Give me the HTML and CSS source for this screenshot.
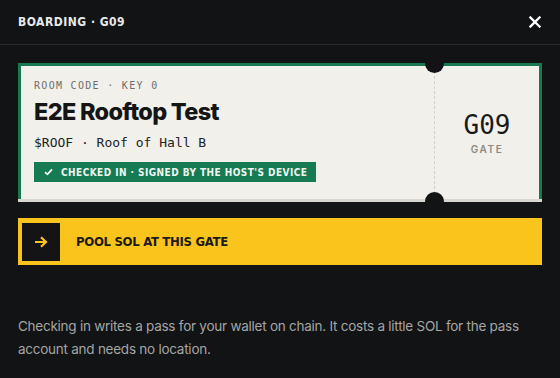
FILE: index.html
```html
<!DOCTYPE html>
<html>
<head>
    <title>Boarding · G09</title>
    <link rel="stylesheet" href="styles.css">
</head>
<body>
    <div class="sheet">
        <div class="sheet-header">
            <h1 class="sheet-title">BOARDING · G09</h1>
            <button class="close-btn" aria-label="Close">
                <svg width="12" height="12" viewBox="0 0 12 12">
                    <path d="M1.5 1.5 L10.5 10.5 M10.5 1.5 L1.5 10.5" stroke="#ffffff" stroke-width="2.3" stroke-linecap="square" fill="none"/>
                </svg>
            </button>
        </div>

        <div class="sheet-body">
            <div class="ticket">
                <div class="ticket-main">
                    <div class="ticket-label">ROOM CODE · KEY 0</div>
                    <div class="ticket-title">E2E Rooftop Test</div>
                    <div class="ticket-sub">$ROOF · Roof of Hall B</div>
                    <div class="badge">
                        <svg width="9" height="8" viewBox="0 0 9 8">
                            <path d="M1 4.2 L3.4 6.4 L8 1.4" stroke="#ffffff" stroke-width="1.6" fill="none"/>
                        </svg>
                        <span>CHECKED IN · SIGNED BY THE HOST'S DEVICE</span>
                    </div>
                </div>
                <div class="ticket-stub">
                    <div class="gate-code">G09</div>
                    <div class="gate-label">GATE</div>
                </div>
            </div>

            <button class="pool-btn">
                <span class="pool-icon">
                    <svg width="14" height="12" viewBox="0 0 14 12">
                        <path d="M1 6 H12 M7 1.2 L12 6 L7 10.8" stroke="#f9c51d" stroke-width="2.2" fill="none"/>
                    </svg>
                </span>
                <span class="pool-text">POOL SOL AT THIS GATE</span>
            </button>

            <p class="note">Checking in writes a pass for your wallet on chain. It costs a little SOL for the pass account and needs no location.</p>
        </div>
    </div>
</body>
</html>
```

FILE: styles.css
```css
body {
    margin: 0;
    background-color: #121315;
    font-family: Inter, "Liberation Sans", sans-serif;
}

.sheet-header {
    height: 44px;
    padding: 0 18px;
    display: flex;
    align-items: center;
    justify-content: space-between;
    border-bottom: 1px solid #2a2b2e;
}

.sheet-title {
    margin: 0;
    font-family: "DejaVu Sans", sans-serif;
    font-stretch: condensed;
    font-size: 12px;
    font-weight: bold;
    letter-spacing: 0.5px;
    color: #e9e9e9;
}

.close-btn {
    background: none;
    border: none;
    padding: 0;
    margin-right: 1px;
    display: flex;
    cursor: pointer;
}

.sheet-body {
    padding: 18px 18px 0;
}

/* ticket card */
.ticket {
    display: flex;
    background-color: #f1f0eb;
    border: 3px solid #18784f;
    border-bottom: none;
    box-shadow: 0 3px 0 #d8d6d0;
}

.ticket-main {
    flex: 1;
    padding: 13px 13px 17px;
}

.ticket-label {
    font-family: "DejaVu Sans Mono", monospace;
    font-size: 10px;
    line-height: 14px;
    letter-spacing: 1.3px;
    color: #6e6d69;
}

.ticket-title {
    margin-top: 5px;
    font-size: 23.5px;
    line-height: 28px;
    font-weight: 800;
    letter-spacing: -0.7px;
    color: #151515;
}

.ticket-sub {
    margin-top: 8px;
    font-family: "DejaVu Sans Mono", monospace;
    font-size: 13px;
    line-height: 18px;
    color: #222222;
}

.badge {
    margin-top: 10px;
    display: inline-flex;
    align-items: center;
    gap: 8px;
    height: 20px;
    padding: 0 9px 0 10px;
    background-color: #167a52;
    color: #eef6f1;
    font-family: "DejaVu Sans", sans-serif;
    font-stretch: condensed;
    font-size: 10px;
    font-weight: bold;
    letter-spacing: 0.45px;
}

.ticket-stub {
    position: relative;
    width: 104px;
    border-left: 1px dashed #d2d0ca;
    display: flex;
    flex-direction: column;
    align-items: center;
    justify-content: center;
}

.ticket-stub::before,
.ticket-stub::after {
    content: "";
    position: absolute;
    left: -10px;
    width: 19px;
    height: 19px;
    border-radius: 50%;
    background-color: #121315;
}

.ticket-stub::before {
    top: -12px;
}

.ticket-stub::after {
    bottom: -12px;
}

.gate-code {
    font-family: "DejaVu Sans Mono", monospace;
    font-size: 26px;
    line-height: 28px;
    color: #1a1a1a;
}

.gate-label {
    margin-top: 4px;
    font-size: 10px;
    font-weight: 600;
    letter-spacing: 1.6px;
    color: #8a8984;
}

/* yellow action */
.pool-btn {
    margin-top: 19px;
    width: 100%;
    height: 47px;
    padding: 0 4px;
    display: flex;
    align-items: center;
    gap: 16px;
    background-color: #f9c51d;
    border: none;
    cursor: pointer;
}

.pool-icon {
    width: 38px;
    height: 38px;
    background-color: #141416;
    display: flex;
    align-items: center;
    justify-content: center;
}

.pool-text {
    font-family: "DejaVu Sans", sans-serif;
    font-stretch: condensed;
    font-size: 13px;
    font-weight: bold;
    letter-spacing: -0.3px;
    color: #1b1a17;
}

.note {
    margin: 50px 0 0;
    font-size: 13.5px;
    line-height: 23px;
    letter-spacing: -0.25px;
    color: #a5a5a5;
}
```
